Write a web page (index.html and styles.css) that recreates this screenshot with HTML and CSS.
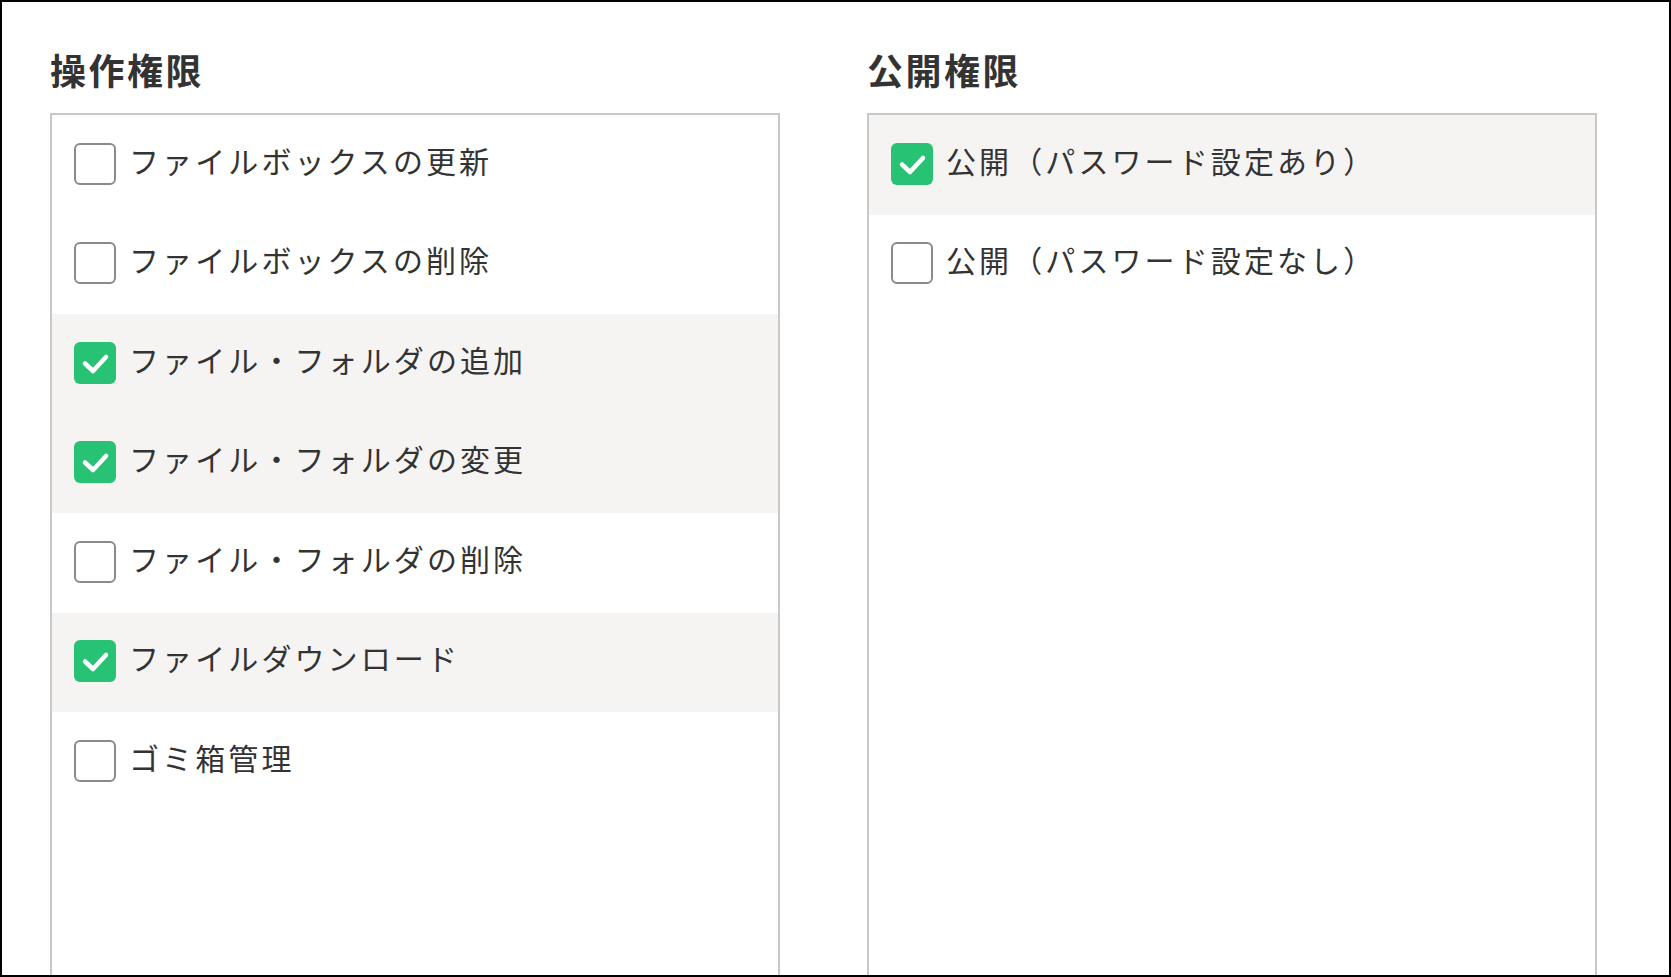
FILE: index.html
```html
<!DOCTYPE html>
<html lang="ja">
<head>
<meta charset="utf-8">
<link rel="stylesheet" href="styles.css">
</head>
<body>
<div class="frame">
  <div class="columns">
    <section class="col">
      <h2 class="title">操作権限</h2>
      <div class="panel">
        <div class="row"><span class="box"></span><span class="label">ファイルボックスの更新</span></div>
        <div class="row"><span class="box"></span><span class="label">ファイルボックスの削除</span></div>
        <div class="row on"><span class="box checked"><svg viewBox="0 0 42 42"><path d="M11 21.5 L19 29 L32 15"/></svg></span><span class="label">ファイル・フォルダの追加</span></div>
        <div class="row on"><span class="box checked"><svg viewBox="0 0 42 42"><path d="M11 21.5 L19 29 L32 15"/></svg></span><span class="label">ファイル・フォルダの変更</span></div>
        <div class="row"><span class="box"></span><span class="label">ファイル・フォルダの削除</span></div>
        <div class="row on"><span class="box checked"><svg viewBox="0 0 42 42"><path d="M11 21.5 L19 29 L32 15"/></svg></span><span class="label">ファイルダウンロード</span></div>
        <div class="row"><span class="box"></span><span class="label">ゴミ箱管理</span></div>
      </div>
    </section>
    <section class="col">
      <h2 class="title">公開権限</h2>
      <div class="panel">
        <div class="row on"><span class="box checked"><svg viewBox="0 0 42 42"><path d="M11 21.5 L19 29 L32 15"/></svg></span><span class="label">公開（パスワード設定あり）</span></div>
        <div class="row"><span class="box"></span><span class="label">公開（パスワード設定なし）</span></div>
      </div>
    </section>
  </div>
</div>
</body>
</html>
```
FILE: styles.css
```css
html, body {
  margin: 0;
  padding: 0;
  background: #fff;
}
body {
  font-family: "Noto Sans CJK JP", "Noto Sans", sans-serif;
  color: #333;
}
.frame {
  box-sizing: border-box;
  width: 1671px;
  height: 977px;
  border: 2px solid #000;
  overflow: hidden;
  padding: 47px 0 0 48px;
}
.columns {
  display: flex;
  gap: 87px;
}
.col {
  width: 730px;
}
.title {
  margin: 0 0 24px;
  font-size: 36px;
  line-height: 40px;
  font-weight: 700;
  letter-spacing: 2.5px;
  color: #333;
}
.panel {
  box-sizing: border-box;
  border: 2px solid #c8c8c8;
  height: 900px;
}
.row {
  height: 99.5px;
  display: flex;
  align-items: center;
  padding-left: 22px;
}
.row.on {
  background: #f5f4f3;
}
.box {
  box-sizing: border-box;
  width: 42px;
  height: 42px;
  margin-top: -2px;
  border: 2px solid #8a8a8a;
  border-radius: 6px;
  background: #fff;
  flex: none;
  display: flex;
}
.box.checked {
  border: none;
  background: #27c274;
}
.box svg {
  width: 42px;
  height: 42px;
}
.box svg path {
  fill: none;
  stroke: #fff;
  stroke-width: 4.5;
  stroke-linecap: round;
  stroke-linejoin: round;
}
.label {
  margin-left: 13px;
  padding-bottom: 10px;
  font-size: 30px;
  letter-spacing: 3.1px;
  line-height: 40px;
  color: #333;
}
```
